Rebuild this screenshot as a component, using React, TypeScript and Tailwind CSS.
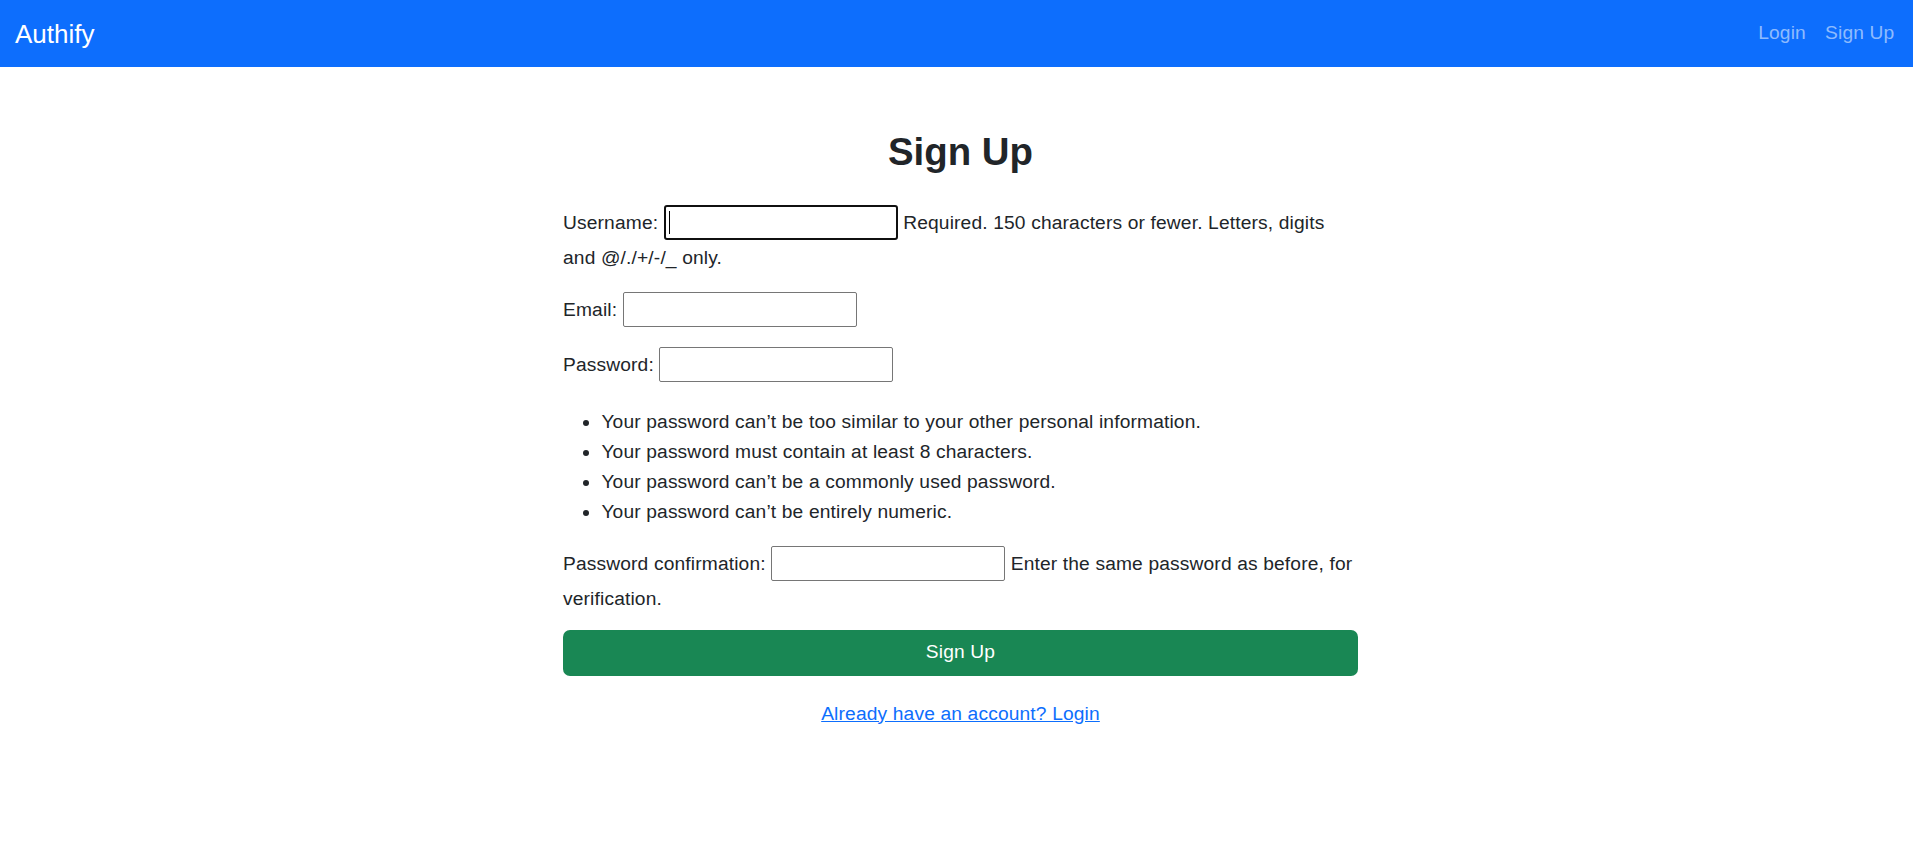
const rules = [
  "Your password can’t be too similar to your other personal information.",
  "Your password must contain at least 8 characters.",
  "Your password can’t be a commonly used password.",
  "Your password can’t be entirely numeric.",
];

function Field({ focused, type = "text" }: { focused?: boolean; type?: string }) {
  return (
    <span className="relative mb-[4px] inline-block align-baseline">
      <input
        type={type}
        className={
          focused
            ? "box-border h-[35px] w-[234px] rounded-[3px] border-2 border-[#101010] bg-white px-[2px] align-baseline outline-none"
            : "box-border h-[35px] w-[234px] rounded-[2px] border border-[#767676] bg-white px-[2px] align-baseline outline-none"
        }
      />
      {focused && <span className="absolute left-[5px] top-[6px] h-[23px] w-px bg-black" />}
    </span>
  );
}

export default function App() {
  return (
    <div className="min-h-screen bg-white font-['Liberation_Sans',Arial,sans-serif] text-[19.2px] leading-[28.8px] tracking-[0.15px] text-[#212529]">
      <nav className="flex h-[67px] items-center justify-between bg-[#0d6efd] pl-[15px] pr-[9px]">
        <a href="#" className="text-[26px] leading-[36px] tracking-normal text-white">
          Authify
        </a>
        <div className="flex items-center">
          <a href="#" className="px-[9.6px] text-[rgba(255,255,255,0.55)]">
            Login
          </a>
          <a href="#" className="px-[9.6px] text-[rgba(255,255,255,0.55)]">
            Sign Up
          </a>
        </div>
      </nav>

      <div className="flex justify-center pl-[8px]">
        <main className="w-[795px] pt-[62px]">
          <h2 className="mb-[30px] text-center text-[38.4px] font-semibold leading-[46px] tracking-normal">
            Sign Up
          </h2>
          <form>
            <p className="mb-[19px] pr-[16px]">
              <label>Username:</label> <Field focused />{" "}
              <span>Required. 150 characters or fewer. Letters, digits and @/./+/-/_ only.</span>
            </p>
            <p className="mb-[16px]">
              <label>Email:</label> <Field type="email" />
            </p>
            <p className="mb-[21px]">
              <label>Password:</label> <Field type="password" />
            </p>
            <ul className="mb-[19px] list-disc pl-[38.4px] leading-[30px]">
              {rules.map((r) => (
                <li key={r}>{r}</li>
              ))}
            </ul>
            <p className="mb-[16px]">
              <label>Password confirmation:</label> <Field type="password" />{" "}
              <span>Enter the same password as before, for verification.</span>
            </p>
            <button
              type="button"
              className="block h-[46px] w-full rounded-[7px] bg-[#198754] text-white"
            >
              Sign Up
            </button>
          </form>
          <p className="mt-[24px] text-center">
            <a href="#" className="text-[#0d6efd] underline">
              Already have an account? Login
            </a>
          </p>
        </main>
      </div>
    </div>
  );
}
